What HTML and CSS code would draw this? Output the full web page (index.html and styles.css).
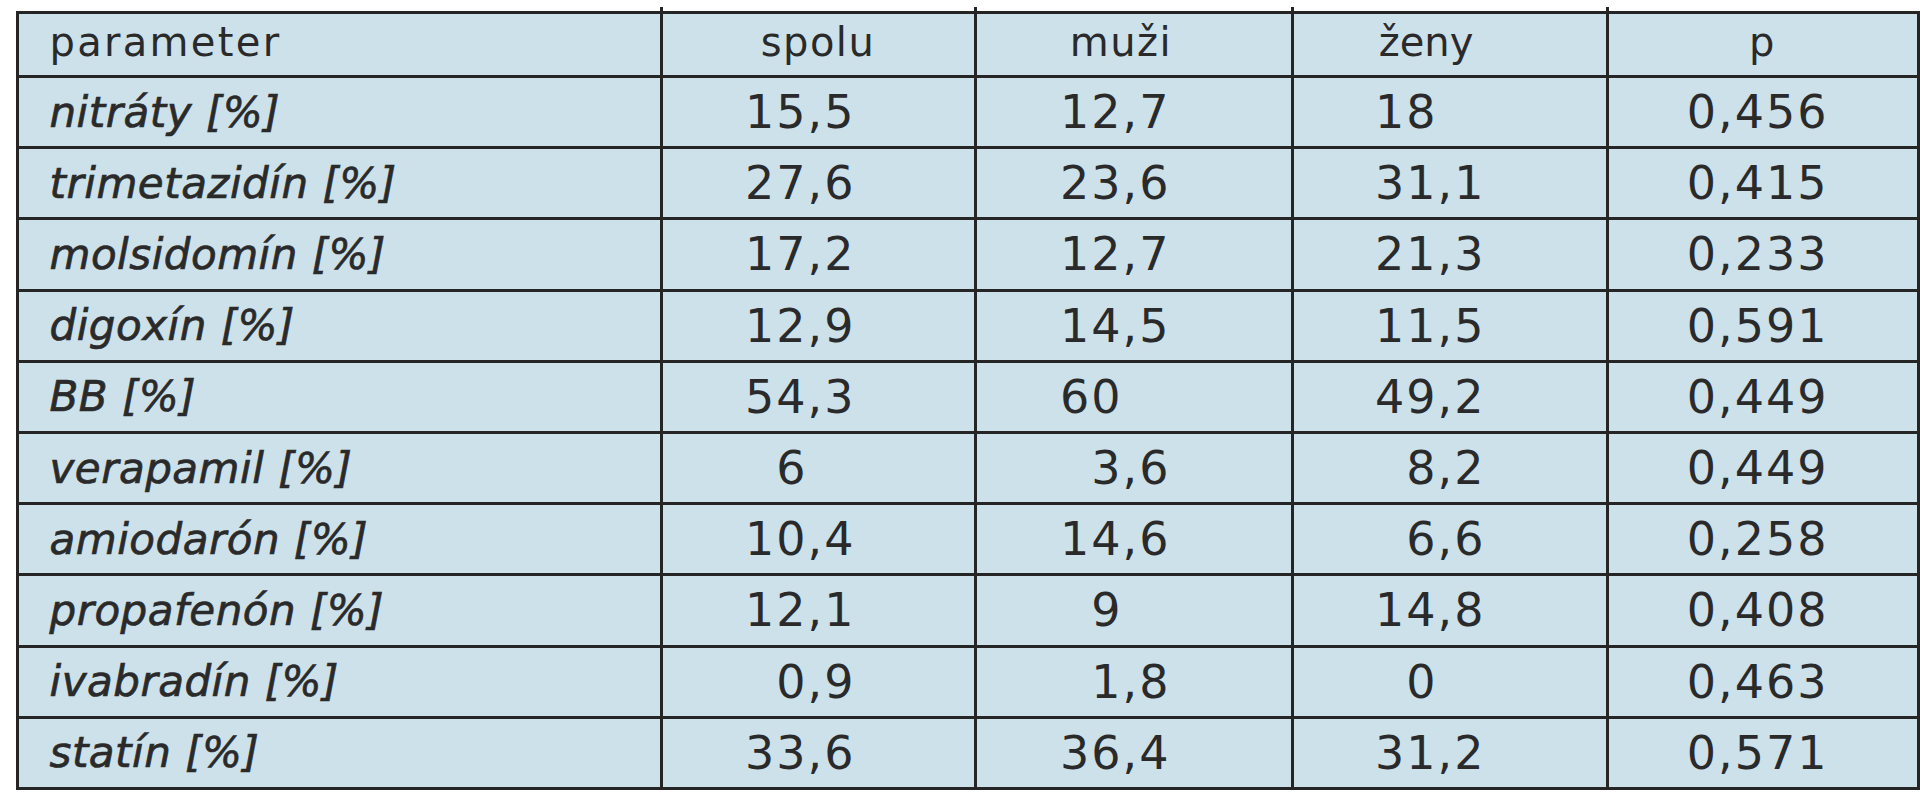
FILE: index.html
```html
<!DOCTYPE html>
<html lang="sk">
<head>
<meta charset="utf-8">
<title>Tabuľka</title>
<link rel="stylesheet" href="styles.css">
</head>
<body>
<table class="data">
  <colgroup>
    <col class="c-param">
    <col class="c-spolu">
    <col class="c-muzi">
    <col class="c-zeny">
    <col class="c-p">
  </colgroup>
  <thead>
    <tr class="head-row">
      <th class="h-param">parameter</th>
      <th class="h h-spolu">spolu</th>
      <th class="h h-muzi">muži</th>
      <th class="h h-zeny">ženy</th>
      <th class="h h-p">p</th>
    </tr>
  </thead>
  <tbody>
    <tr><th class="label" scope="row">nitráty [%]</th><td class="n n-spolu">15,5</td><td class="n n-muzi">12,7</td><td class="n n-zeny"><span class="int">18</span></td><td class="n n-p">0,456</td></tr>
    <tr><th class="label" scope="row">trimetazidín [%]</th><td class="n n-spolu">27,6</td><td class="n n-muzi">23,6</td><td class="n n-zeny">31,1</td><td class="n n-p">0,415</td></tr>
    <tr><th class="label" scope="row">molsidomín [%]</th><td class="n n-spolu">17,2</td><td class="n n-muzi">12,7</td><td class="n n-zeny">21,3</td><td class="n n-p">0,233</td></tr>
    <tr><th class="label" scope="row">digoxín [%]</th><td class="n n-spolu">12,9</td><td class="n n-muzi">14,5</td><td class="n n-zeny">11,5</td><td class="n n-p">0,591</td></tr>
    <tr><th class="label" scope="row">BB [%]</th><td class="n n-spolu">54,3</td><td class="n n-muzi"><span class="int">60</span></td><td class="n n-zeny">49,2</td><td class="n n-p">0,449</td></tr>
    <tr><th class="label" scope="row">verapamil [%]</th><td class="n n-spolu"><span class="int">6</span></td><td class="n n-muzi">3,6</td><td class="n n-zeny">8,2</td><td class="n n-p">0,449</td></tr>
    <tr><th class="label" scope="row">amiodarón [%]</th><td class="n n-spolu">10,4</td><td class="n n-muzi">14,6</td><td class="n n-zeny">6,6</td><td class="n n-p">0,258</td></tr>
    <tr><th class="label" scope="row">propafenón [%]</th><td class="n n-spolu">12,1</td><td class="n n-muzi"><span class="int">9</span></td><td class="n n-zeny">14,8</td><td class="n n-p">0,408</td></tr>
    <tr><th class="label" scope="row">ivabradín [%]</th><td class="n n-spolu">0,9</td><td class="n n-muzi">1,8</td><td class="n n-zeny"><span class="int">0</span></td><td class="n n-p">0,463</td></tr>
    <tr class="last-row"><th class="label" scope="row">statín [%]</th><td class="n n-spolu">33,6</td><td class="n n-muzi">36,4</td><td class="n n-zeny">31,2</td><td class="n n-p">0,571</td></tr>
  </tbody>
</table>
</body>
</html>
```
FILE: styles.css
```css
html, body {
  margin: 0;
  padding: 0;
  background: #ffffff;
}

.data {
  border-collapse: collapse;
  table-layout: fixed;
  width: 1904px;
  margin: 11px 0 0 15.5px;
  background: #cce1ea;
  color: #2a2a2a;
  font-family: "DejaVu Sans", "Verdana", sans-serif;
}

.c-param { width: 644px; }
.c-spolu { width: 314px; }
.c-muzi  { width: 317px; }
.c-zeny  { width: 315px; }
.c-p     { width: 311px; }

th,
td {
  border: 3px solid #252525;
  padding: 0;
  vertical-align: middle;
  white-space: nowrap;
  position: relative;
  font-weight: normal;
}

.head-row { height: 64px; }
tbody tr { height: 71.2px; }

/* header */
.h-param,
.h {
  font-size: 40px;
  letter-spacing: 1.5px;
  padding-bottom: 5px;
}

.h-param {
  text-align: left;
  padding-left: 31px;
  letter-spacing: 2.3px;
}

.h { text-align: center; }
.h-muzi { padding-right: 25px; }
.h-zeny { padding-right: 47px; letter-spacing: 0; }

/* little overshoot of vertical rules above the top border */
.h::before {
  content: "";
  position: absolute;
  left: -3px;
  top: -7px;
  width: 3px;
  height: 6px;
  background: #252525;
}

/* row labels */
.label {
  text-align: left;
  padding-left: 31px;
  font-size: 42px;
  font-style: italic;
  letter-spacing: 0.5px;
  -webkit-text-stroke: 0.7px #2a2a2a;
}

/* numbers, decimal aligned */
.n {
  text-align: right;
  font-size: 46px;
  letter-spacing: 2px;
}

.n-spolu { padding-right: 118px; }
.n-muzi  { padding-right: 120px; }
.n-zeny  { padding-right: 120px; }
.n-p     { padding-right: 88px; }

.int {
  padding-right: calc(0.954em + 4px);
}

.last-row td::after {
  content: "";
  position: absolute;
  left: -3px;
  bottom: -7px;
  width: 3px;
  height: 6px;
  background: #252525;
}
```
